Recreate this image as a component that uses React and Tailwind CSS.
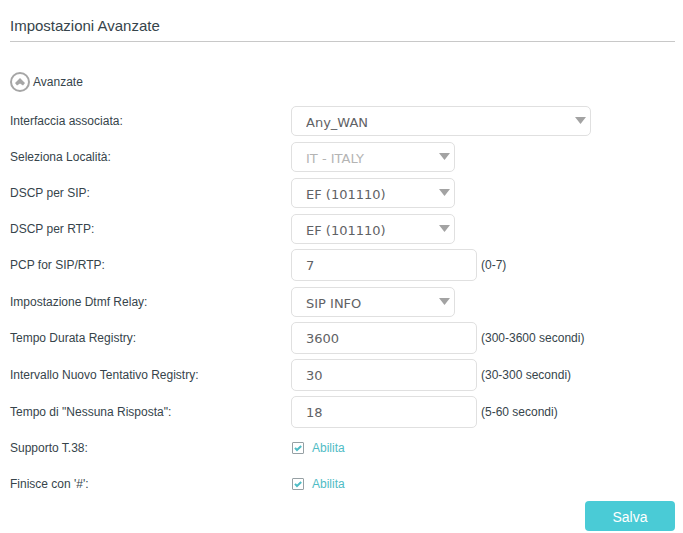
import React, { useState } from 'react';

const boxClass =
    'rounded-[5px] border border-[#e0e0e0] bg-white pl-[14px] font-["DejaVu_Sans",Verdana,sans-serif] text-[13px] text-[#5f6265] outline-none focus:border-[#4acbd6]';

const Row = ({ id, label, children }) => (
    <div className="flex h-9 items-center">
        <label htmlFor={id} className="w-[281px] shrink-0">{label}</label>
        {children}
    </div>
);

const SelectRow = ({ id, label, value, wide, disabled }) => (
    <Row id={id} label={label}>
        <div className={`relative ${wide ? 'w-[300px]' : 'w-[164px]'}`}>
            <select
                id={id}
                defaultValue={value}
                disabled={disabled}
                className={`block h-[30px] w-full appearance-none pr-6 pt-[3px] disabled:text-[#b4b4b4] disabled:opacity-100 ${boxClass}`}
            >
                <option>{value}</option>
            </select>
            <svg
                viewBox="0 0 11 7"
                className="pointer-events-none absolute right-[5px] top-[11px] h-[7px] w-[11px]"
                aria-hidden="true"
            >
                <path d="M0 0h11L5.5 7z" fill="#a3a3a3" />
            </svg>
        </div>
    </Row>
);

const InputRow = ({ id, label, value, hint }) => (
    <div className="flex h-[37px] items-center pb-px">
        <label htmlFor={id} className="w-[281px] shrink-0">{label}</label>
        <input id={id} type="text" defaultValue={value} className={`h-8 w-[186px] pt-px ${boxClass}`} />
        <span className="ml-1">{hint}</span>
    </div>
);

const CheckRow = ({ id, label }) => (
    <div className="flex h-9 items-center pb-[2px]">
        <span className="w-[281px] shrink-0">{label}</span>
        <label htmlFor={id} className="flex cursor-pointer items-center text-[#4fbcc5]">
            <span className="relative ml-px mr-2 block h-3 w-3">
                <input
                    id={id}
                    type="checkbox"
                    defaultChecked
                    className="peer block h-3 w-3 appearance-none rounded-[1px] border border-[#96a0a4] bg-white"
                />
                <svg
                    viewBox="0 0 12 12"
                    className="pointer-events-none absolute inset-0 hidden h-3 w-3 peer-checked:block"
                    aria-hidden="true"
                >
                    <path d="M3 5.8l2 2.2L9.2 4" fill="none" stroke="#4fbcc5" strokeWidth="2" />
                </svg>
            </span>
            Abilita
        </label>
    </div>
);

const App = () => {
    const [open, setOpen] = useState(true);

    return (
        <main className='bg-white pl-[10px] pr-2 font-["Liberation_Sans",Arial,sans-serif] text-[12px] leading-4 text-[#36444b]'>
            <h1 className="border-b border-[#c8c8c8] pb-[5px] pt-4 text-[15px] leading-5">
                Impostazioni Avanzate
            </h1>

            <form onSubmit={(e) => e.preventDefault()}>
                <button
                    type="button"
                    onClick={() => setOpen(!open)}
                    aria-expanded={open}
                    className="mb-[11px] mt-[30px] flex cursor-pointer items-center gap-[3px]"
                >
                    <svg viewBox="0 0 20 20" className={`h-5 w-5 ${open ? '' : 'rotate-180'}`} aria-hidden="true">
                        <circle cx="10" cy="10" r="9" fill="none" stroke="#a6a6a6" strokeWidth="2" />
                        <path d="M10 6l5 5-2 2.4-3-1.8-3 1.8-2-2.4z" fill="#a6a6a6" />
                    </svg>
                    Avanzate
                </button>

                {open && (
                    <div>
                        <SelectRow id="interface" label="Interfaccia associata:" value="Any_WAN" wide />
                        <SelectRow id="locale" label="Seleziona Località:" value="IT - ITALY" disabled />
                        <SelectRow id="dscp-sip" label="DSCP per SIP:" value="EF (101110)" />
                        <SelectRow id="dscp-rtp" label="DSCP per RTP:" value="EF (101110)" />
                        <InputRow id="pcp" label="PCP for SIP/RTP:" value="7" hint="(0-7)" />
                        <SelectRow id="dtmf" label="Impostazione Dtmf Relay:" value="SIP INFO" />
                        <InputRow id="registry" label="Tempo Durata Registry:" value="3600" hint="(300-3600 secondi)" />
                        <InputRow id="retry" label="Intervallo Nuovo Tentativo Registry:" value="30" hint="(30-300 secondi)" />
                        <InputRow id="no-answer" label={'Tempo di "Nessuna Risposta":'} value="18" hint="(5-60 secondi)" />
                        <CheckRow id="t38" label="Supporto T.38:" />
                        <CheckRow id="hash" label="Finisce con '#':" />
                    </div>
                )}

                <div className="-mt-[2px] flex justify-end pb-[2px]">
                    <button
                        type="submit"
                        className="h-[30px] w-[90px] cursor-pointer rounded-[4px] bg-[#4acbd6] pt-[2px] text-[14px] text-white"
                    >
                        Salva
                    </button>
                </div>
            </form>
        </main>
    );
};

export default App;
